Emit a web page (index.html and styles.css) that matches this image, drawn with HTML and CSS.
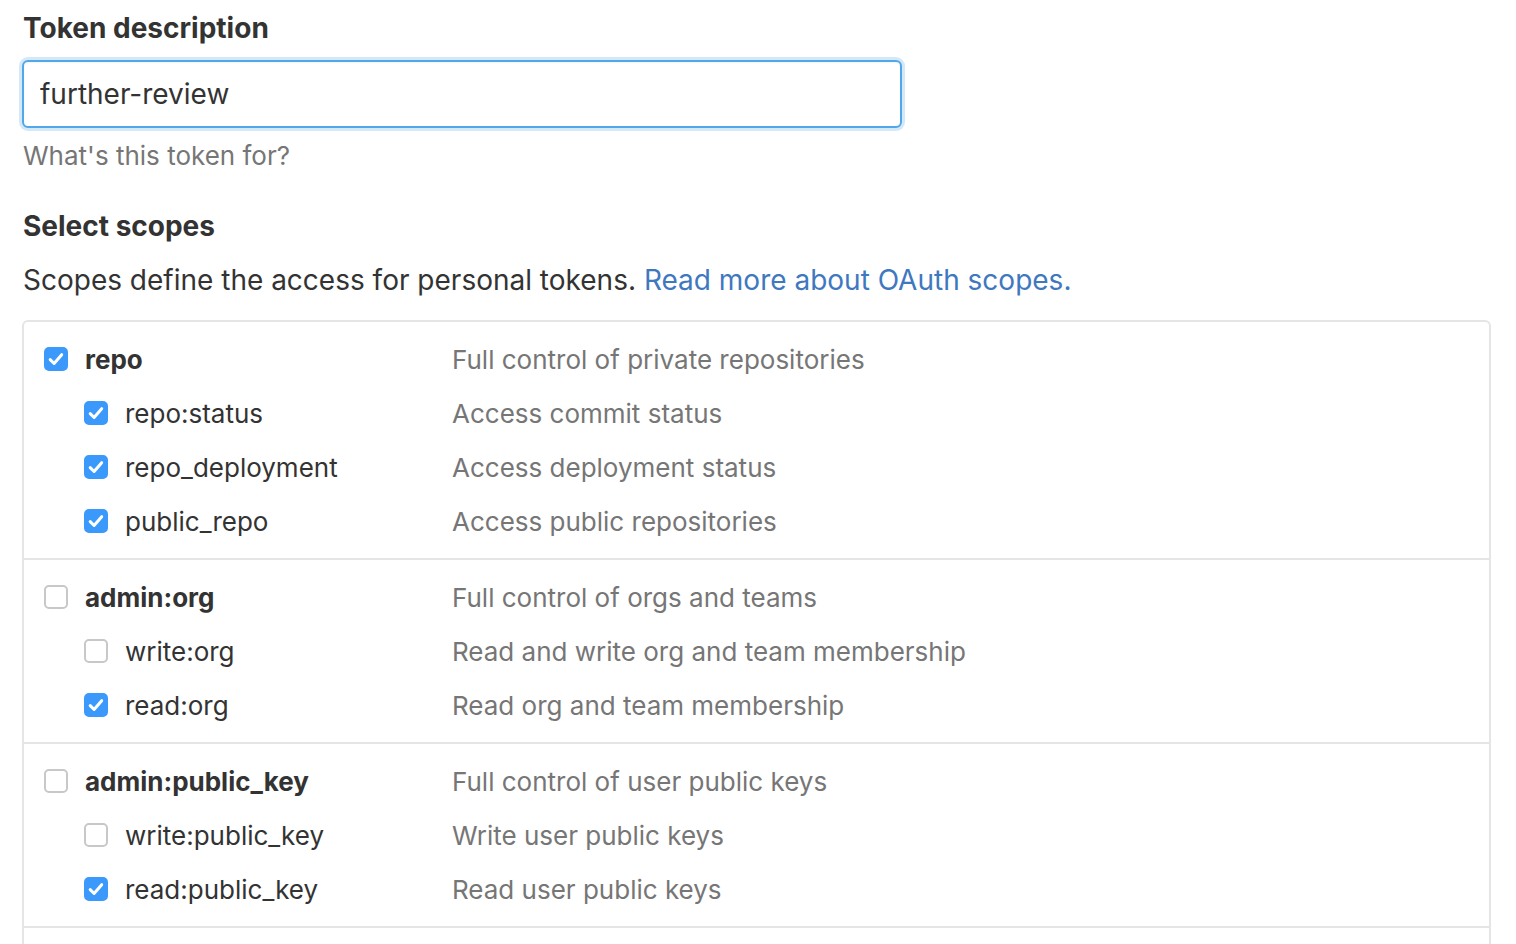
FILE: index.html
```html
<!DOCTYPE html>
<html lang="en">
<head>
<meta charset="utf-8">
<title>New personal access token</title>
<link rel="stylesheet" href="styles.css">
</head>
<body>
<main class="page">
  <section class="field">
    <label class="field-label" for="desc">Token description</label>
    <input id="desc" class="field-input" type="text" value="further-review">
    <p class="field-note">What's this token for?</p>
  </section>

  <section class="scopes">
    <h2 class="scopes-title">Select scopes</h2>
    <p class="scopes-lead">Scopes define the access for personal tokens. <a class="link" href="#">Read more about OAuth scopes.</a></p>

    <div class="scope-box">
      <div class="group">
        <div class="row top"><span class="name"><span class="cb on"><svg viewBox="0 0 24 24"><path d="M6.2 12.6l3.9 3.9 7.6-8.8"/></svg></span>repo</span><span class="desc">Full control of private repositories</span></div>
        <div class="row sub"><span class="name"><span class="cb on"><svg viewBox="0 0 24 24"><path d="M6.2 12.6l3.9 3.9 7.6-8.8"/></svg></span>repo:status</span><span class="desc">Access commit status</span></div>
        <div class="row sub"><span class="name"><span class="cb on"><svg viewBox="0 0 24 24"><path d="M6.2 12.6l3.9 3.9 7.6-8.8"/></svg></span>repo_deployment</span><span class="desc">Access deployment status</span></div>
        <div class="row sub"><span class="name"><span class="cb on"><svg viewBox="0 0 24 24"><path d="M6.2 12.6l3.9 3.9 7.6-8.8"/></svg></span>public_repo</span><span class="desc">Access public repositories</span></div>
      </div>
      <div class="group">
        <div class="row top"><span class="name"><span class="cb"></span>admin:org</span><span class="desc">Full control of orgs and teams</span></div>
        <div class="row sub"><span class="name"><span class="cb"></span>write:org</span><span class="desc">Read and write org and team membership</span></div>
        <div class="row sub"><span class="name"><span class="cb on"><svg viewBox="0 0 24 24"><path d="M6.2 12.6l3.9 3.9 7.6-8.8"/></svg></span>read:org</span><span class="desc">Read org and team membership</span></div>
      </div>
      <div class="group">
        <div class="row top"><span class="name"><span class="cb"></span>admin:public_key</span><span class="desc">Full control of user public keys</span></div>
        <div class="row sub"><span class="name"><span class="cb"></span>write:public_key</span><span class="desc">Write user public keys</span></div>
        <div class="row sub"><span class="name"><span class="cb on"><svg viewBox="0 0 24 24"><path d="M6.2 12.6l3.9 3.9 7.6-8.8"/></svg></span>read:public_key</span><span class="desc">Read user public keys</span></div>
      </div>
      <div class="group-tail"></div>
    </div>
  </section>
</main>
</body>
</html>
```

FILE: styles.css
```css
html, body {
  margin: 0;
  padding: 0;
  background: #fff;
}
body {
  font-family: Inter, "Liberation Sans", Arial, sans-serif;
  color: #333;
  font-size: 28px;
  overflow: hidden;
}
.page {
  padding: 8px 24px 0 22px;
  width: 1470px;
}
.field {
  display: flex;
  flex-direction: column;
  align-items: flex-start;
}
.field-label {
  font-weight: 700;
  font-size: 28px;
  line-height: 40px;
  margin: 0 0 12px 1px;
}
.field-input {
  box-sizing: border-box;
  width: 880px;
  height: 68px;
  border: 2px solid #51a7e8;
  border-radius: 6px;
  box-shadow: 0 0 0 3px rgba(81, 167, 232, 0.25), inset 0 1px 2px rgba(0,0,0,0.05);
  padding: 0 16px;
  font-family: inherit;
  font-size: 28px;
  color: #333;
  outline: none;
}
.field-note {
  margin: 10px 0 0 1px;
  font-size: 26px;
  line-height: 36px;
  color: #767676;
}
.scopes-title {
  margin: 32px 0 0 1px;
  font-size: 28px;
  line-height: 40px;
  font-weight: 700;
}
.scopes-lead {
  margin: 14px 0 20px 1px;
  font-size: 28px;
  line-height: 40px;
  color: #333;
}
.link {
  color: #4078c0;
  text-decoration: none;
}
.scope-box {
  border: 2px solid #e5e5e5;
  border-radius: 6px;
  width: 1469px;
  box-sizing: border-box;
}
.group {
  padding: 10px 0;
  border-bottom: 2px solid #e5e5e5;
}
.group-tail {
  height: 60px;
}
.row {
  display: flex;
  align-items: center;
  height: 54px;
  font-size: 26px;
}
.name {
  display: flex;
  align-items: center;
  gap: 17px;
  color: #333;
}
.row.top .name {
  width: 408px;
  padding-left: 20px;
  font-weight: 700;
}
.row.sub .name {
  width: 368px;
  padding-left: 60px;
}
.desc {
  color: #767676;
}
.cb {
  box-sizing: border-box;
  width: 24px;
  height: 24px;
  border-radius: 5px;
  border: 2px solid #c8c8c8;
  background: #fff;
  flex: none;
  display: flex;
  align-items: center;
  justify-content: center;
}
.cb.on {
  background: #3b99fc;
  border-color: #3b99fc;
}
.cb svg {
  width: 24px;
  height: 24px;
  flex: none;
  fill: none;
  stroke: #fff;
  stroke-width: 3;
  stroke-linecap: round;
  stroke-linejoin: round;
}
```
